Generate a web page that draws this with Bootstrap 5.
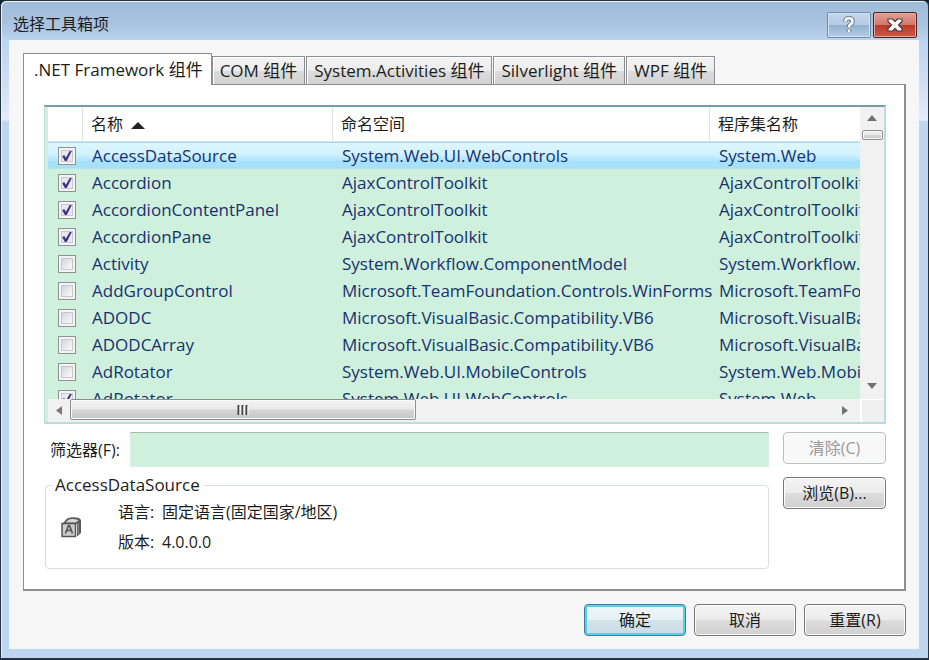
<!DOCTYPE html>
<html lang="zh-CN">
<head>
<meta charset="utf-8">
<meta name="viewport" content="width=device-width, initial-scale=1">
<title>选择工具箱项</title>
<link href="https://cdn.jsdelivr.net/npm/bootstrap@5.3.0/dist/css/bootstrap.min.css" rel="stylesheet">
<style>
body{font-family:"Open Sans","Noto Sans CJK SC",sans-serif;font-size:16px;line-height:24px;color:#1c1c1c;background:#0d2334}
button{font-family:inherit}
.dialog{border:1px solid #26323f;border-bottom-width:2px;border-radius:6px 6px 0 0;padding:0 9px 9px 8px;
 background:linear-gradient(#a0bbd9 0,#a9c3e0 24px,#bbd4ef 40px,#d3e2f5 90px,#e2ebf9 119px,#bfd6f0 121px,#bfd6f0 100%);box-shadow:inset 1px 1px 0 #e6f1fb}
.titlebar{height:39px;padding:11px 2px 0 4px}
.titlebar h1{font-size:16px;line-height:24px}
.caption-buttons{gap:2px}
.cap{width:44px;height:26px;padding:0;display:flex;align-items:center;justify-content:center;border:1px solid #7189a8;border-radius:2px;background:linear-gradient(#c3d5e9 0,#b5cbe4 48%,#94b0d0 50%,#b3cbe6 100%);box-shadow:inset 0 0 0 1px #d4e3f2}
.cap-close{border-color:#4c2225;background:linear-gradient(#dfa194 0,#d07a6a 48%,#b9372a 50%,#cc5a45 100%);box-shadow:inset 0 0 0 1px #e8a99b}
.client{background:#f6f6f6;padding:13px 13px 13px 14px;min-height:0}
.tabs .nav-link{height:28px;padding:0 7px;color:#1c1c1c;font-size:17px;line-height:28px;border:1px solid #8c8e94;border-bottom:0;border-radius:0;background:linear-gradient(#f3f3f3 0,#ededed 50%,#dcdcdc 52%,#d2d2d2 100%);box-shadow:inset 1px 1px 0 #fff;white-space:nowrap}
.tabs .nav-link.active{height:32px;padding:0 8px 0 10px;line-height:28px;margin-bottom:-1px;background:#fff;color:#1c1c1c;position:relative;z-index:1}
.tabs .nav-item + .nav-item + .nav-item{margin-left:1px}
.pane{background:#fff;border:1px solid #8c8e94;border-right-width:2px;border-bottom-width:2px;padding:20px 18px 20px 20px;min-height:0}
.listbox{border:1px solid #b8dde0;border-top:2px solid #769fa5;border-right-width:2px;border-bottom-width:2px;background:#cff0dc;min-height:0;padding-left:3px}
.viewport-area{min-height:0;min-width:0;overflow:hidden}
.grid{width:100%;table-layout:fixed;border-collapse:separate;border-spacing:0;color:#17316f}
.grid th{height:35px;background:#fff;color:#1c1c1c;font-weight:400;padding:0 0 0 8px;border-right:1px solid #dfe3e8;border-bottom:1px solid #d5e6ea}
.grid th:last-child{border-right:0}
.grid td{height:27px;padding:0 0 0 9px;white-space:nowrap;font-size:17px;line-height:24px}
.grid td:first-child{padding:0 0 0 10px}
.grid td input{display:block;appearance:none;width:18px;height:18px;margin:0;border:1px solid #8d9395;background:linear-gradient(135deg,#c9cbd0,#f7f7fa 75%);box-shadow:inset 0 0 0 2px #f4f4f4,inset 0 0 0 3px #c5c8cc}
.grid td input:checked{background:url("data:image/svg+xml,%3Csvg xmlns='http://www.w3.org/2000/svg' viewBox='0 0 16 16'%3E%3Cpath d='M3.2 8.2l2-1.1 1.7 2.7L11 2.6l2.2-.4-5.6 11H6z' fill='%2339347f'/%3E%3C/svg%3E"),#e7e8f2}
.grid tr.picked td{background:linear-gradient(#ddf7fd 0,#d2f2ff 45%,#a8e1fc 75%,#a5e0fb 100%);border-top:1px solid #9fdaf0;border-bottom:1px solid #b5e6ee}
.col-check{width:35px}.col-name{width:250px}.col-ns{width:377px}
.vscroll{width:24px;background:#f1f1f1}
.hscroll{height:23px;background:#f1f1f1}
.arrow{border:0;background:none;padding:0;width:22px;height:22px;display:flex;align-items:center;justify-content:center}
.arrow-down{height:27px}
.thumb{border:1px solid #8d8d8d;border-radius:2px;background:linear-gradient(#f5f5f5 0,#e9e9e9 48%,#d6d6d6 52%,#c6c6c6 100%);box-shadow:inset 0 0 0 1px #fafafa}
.thumb-v{width:21px;height:10px;margin-top:1px}
.thumb-h{width:346px;height:21px}
.corner{width:24px;border-left:2px solid #fff;border-top:1px solid #fff;background:#f0f0f0}
.filter-box{height:35px;border:1px solid #d8efe6;border-top-color:#a6b9af;border-radius:0;background:#cff0dc;padding:0 6px}
.filter-label{width:86px;padding-left:6px;white-space:nowrap}
.lower{gap:14px;padding-top:8px}
.side{width:103px;gap:13px}
.push{height:32px;width:102px;padding:0;border:1px solid #777;border-radius:4px;color:#1c1c1c;font-size:16px;line-height:24px;background:linear-gradient(#f4f4f4 0,#ebebeb 48%,#dcdcdc 52%,#d0d0d0 100%);box-shadow:inset 0 0 0 1px #fcfcfc}
.push:disabled{color:#9a9a9a;background:#f8f8f8;border-color:#b9bfc3}
.push-default{border-color:#3d7f98;background:linear-gradient(#eef7fa 0,#e5f1f5 48%,#d2e2e9 52%,#c9dce4 100%);box-shadow:inset 0 0 0 2px #5bcdec}
.details{border:1px solid #d5dfe5;border-radius:4px;height:96px;margin:6px 0 0 1px;padding:0 0 0 15px}
.details legend{float:none;width:auto;font-size:17px;line-height:24px;margin:0 0 0 -8px;padding:0 5px 0 2px}
.info{line-height:30px;padding-left:35px}
.info dt{font-weight:400;width:44px}
.footer-row{gap:8px;padding-top:13px}
</style>
</head>
<body>
<main class="dialog vh-100 d-flex flex-column">
  <header class="titlebar d-flex justify-content-between align-items-start flex-shrink-0">
    <h1 class="fw-normal mb-0">选择工具箱项</h1>
    <div class="caption-buttons d-flex">
      <button type="button" class="cap" aria-label="帮助"><svg width="20" height="22" viewBox="0 0 20 22" aria-hidden="true"><g fill="none" stroke-linejoin="round"><path d="M6.500 7.500C6.500 3 13.500 3 13.500 7.500C13.500 10.500 10 10 10 13M10 15.500v2.500" stroke="#53647a" stroke-width="4.500"/><path d="M6.500 7.500C6.500 3 13.500 3 13.500 7.500C13.500 10.500 10 10 10 13M10 15.500v2.500" stroke="#f6f9fb" stroke-width="2.800"/></g></svg></button>
      <button type="button" class="cap cap-close" aria-label="关闭"><svg width="20" height="18" viewBox="0 0 20 18" aria-hidden="true"><path d="M3 3h4.500L10 5.500 12.500 3H17v2.500L13.500 9l3.500 3.500V15h-4.500L10 12.500 7.500 15H3v-2.500L6.500 9 3 5.500z" fill="#fff" stroke="#4c3a48" stroke-width="1.200" stroke-linejoin="round"/></svg></button>
    </div>
  </header>
  <div class="client flex-grow-1 d-flex flex-column">
    <ul class="tabs nav align-items-end flex-nowrap" role="tablist">
      <li class="nav-item"><button type="button" role="tab" class="nav-link active" aria-selected="true">.NET Framework 组件</button></li>
      <li class="nav-item"><button type="button" role="tab" class="nav-link">COM 组件</button></li>
      <li class="nav-item"><button type="button" role="tab" class="nav-link">System.Activities 组件</button></li>
      <li class="nav-item"><button type="button" role="tab" class="nav-link">Silverlight 组件</button></li>
      <li class="nav-item"><button type="button" role="tab" class="nav-link">WPF 组件</button></li>
    </ul>
    <section class="pane flex-grow-1 d-flex flex-column">
      <div class="listbox flex-grow-1 d-flex flex-column">
        <div class="d-flex flex-grow-1 overflow-hidden">
          <div class="viewport-area flex-grow-1">
            <table class="grid">
              <colgroup><col class="col-check"><col class="col-name"><col class="col-ns"><col></colgroup>
              <thead><tr><th></th><th>名称 <svg class="ms-1" width="14" height="7" viewBox="0 0 14 7" aria-hidden="true"><path d="M0 7l7-7 7 7z" fill="#222"/></svg></th><th>命名空间</th><th>程序集名称</th></tr></thead>
              <tbody>
                <tr class="picked"><td><input type="checkbox" checked aria-label="AccessDataSource"></td><td>AccessDataSource</td><td>System.Web.UI.WebControls</td><td>System.Web</td></tr>
                <tr><td><input type="checkbox" checked aria-label="Accordion"></td><td>Accordion</td><td>AjaxControlToolkit</td><td>AjaxControlToolkit</td></tr>
                <tr><td><input type="checkbox" checked aria-label="AccordionContentPanel"></td><td>AccordionContentPanel</td><td>AjaxControlToolkit</td><td>AjaxControlToolkit</td></tr>
                <tr><td><input type="checkbox" checked aria-label="AccordionPane"></td><td>AccordionPane</td><td>AjaxControlToolkit</td><td>AjaxControlToolkit</td></tr>
                <tr><td><input type="checkbox" aria-label="Activity"></td><td>Activity</td><td>System.Workflow.ComponentModel</td><td>System.Workflow.ComponentModel</td></tr>
                <tr><td><input type="checkbox" aria-label="AddGroupControl"></td><td>AddGroupControl</td><td>Microsoft.TeamFoundation.Controls.WinForms</td><td>Microsoft.TeamFoundation.Controls</td></tr>
                <tr><td><input type="checkbox" aria-label="ADODC"></td><td>ADODC</td><td>Microsoft.VisualBasic.Compatibility.VB6</td><td>Microsoft.VisualBasic.Compatibility</td></tr>
                <tr><td><input type="checkbox" aria-label="ADODCArray"></td><td>ADODCArray</td><td>Microsoft.VisualBasic.Compatibility.VB6</td><td>Microsoft.VisualBasic.Compatibility</td></tr>
                <tr><td><input type="checkbox" aria-label="AdRotator"></td><td>AdRotator</td><td>System.Web.UI.MobileControls</td><td>System.Web.Mobile</td></tr>
                <tr><td><input type="checkbox" checked aria-label="AdRotator"></td><td>AdRotator</td><td>System.Web.UI.WebControls</td><td>System.Web</td></tr>
              </tbody>
            </table>
          </div>
          <div class="vscroll d-flex flex-column align-items-center flex-shrink-0">
            <button type="button" class="arrow" aria-label="向上滚动"><svg width="10" height="6" viewBox="0 0 10 6"><path d="M0 6l5-6 5 6z" fill="#6f7276"/></svg></button>
            <div class="thumb thumb-v"></div>
            <button type="button" class="arrow arrow-down mt-auto" aria-label="向下滚动"><svg width="10" height="6" viewBox="0 0 10 6"><path d="M0 0l5 6 5-6z" fill="#6f7276"/></svg></button>
          </div>
        </div>
        <div class="hscroll d-flex flex-shrink-0">
          <button type="button" class="arrow" aria-label="向左滚动"><svg width="6" height="9" viewBox="0 0 6 9"><path d="M6 0L0 4.500 6 9z" fill="#777a7d"/></svg></button>
          <div class="thumb thumb-h d-flex align-items-center justify-content-center"><svg width="12" height="10" viewBox="0 0 12 10"><path d="M1.500 0v10M5.500 0v10M9.500 0v10" stroke="#444" stroke-width="2"/><path d="M3 1v9M7 1v9M11 1v9" stroke="#fff"/></svg></div>
          <button type="button" class="arrow ms-auto me-1" aria-label="向右滚动"><svg width="6" height="9" viewBox="0 0 6 9"><path d="M0 0l6 4.500L0 9z" fill="#6f7276"/></svg></button>
          <div class="corner"></div>
        </div>
      </div>
      <div class="lower d-flex">
        <div class="flex-grow-1">
          <div class="d-flex align-items-center">
            <label class="filter-label" for="filter">筛选器(F):</label>
            <input id="filter" type="text" class="filter-box flex-grow-1">
          </div>
          <fieldset class="details">
            <legend>AccessDataSource</legend>
            <div class="d-flex align-items-center">
              <svg width="22" height="22" viewBox="0 0 22 22" aria-hidden="true"><path d="M2 7l4-4.500Q12 .5 18 2l2 2v13l-4 3.500V8z" fill="#5c5c5c"/><path d="M4.500 6.500L8 3.500Q12 2.500 17.500 4L15 6.500z" fill="#d9d9d9"/><path d="M1 7.500h13.500v13H1z" fill="#ccc" stroke="#555" stroke-width="1.500"/><path d="M4.500 17.500l3-8h1l3 8M5.500 14.500h5" fill="none" stroke="#555" stroke-width="1.700"/><path d="M17.200 7v11" stroke="#999"/></svg>
              <dl class="info mb-0">
                <div class="d-flex"><dt>语言:</dt><dd class="mb-0">固定语言(固定国家/地区)</dd></div>
                <div class="d-flex"><dt>版本:</dt><dd class="mb-0">4.0.0.0</dd></div>
              </dl>
            </div>
          </fieldset>
        </div>
        <div class="side d-flex flex-column">
          <button type="button" class="push w-100" disabled>清除(C)</button>
          <button type="button" class="push w-100">浏览(B)...</button>
        </div>
      </div>
    </section>
    <div class="footer-row d-flex justify-content-end">
      <button type="submit" class="push push-default">确定</button>
      <button type="button" class="push">取消</button>
      <button type="button" class="push">重置(R)</button>
    </div>
  </div>
</main>
<script src="https://cdn.jsdelivr.net/npm/bootstrap@5.3.0/dist/js/bootstrap.bundle.min.js"></script>
</body>
</html>
